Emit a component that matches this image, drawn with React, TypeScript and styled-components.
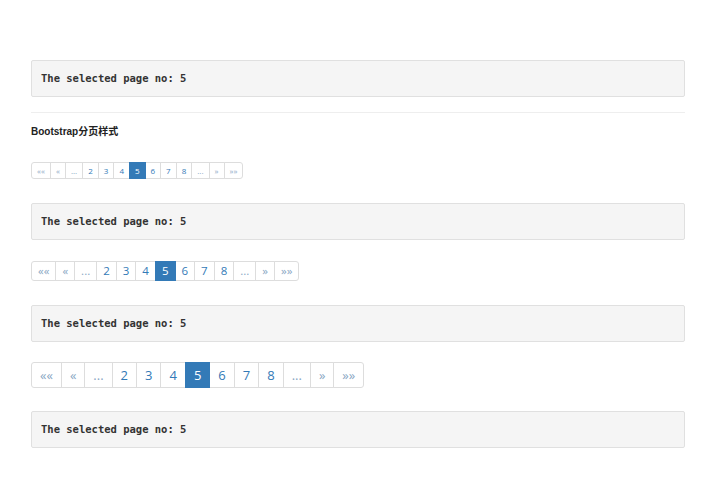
import React from "react";
import styled, { createGlobalStyle, css } from "styled-components";

const GlobalStyle = createGlobalStyle`
  html, body { margin: 0; padding: 0; background: #fff; }
  body { font-family: "Open Sans", "Noto Sans", sans-serif; color: #333; }
`;

const Page = styled.div`
  display: flex;
  flex-direction: column;
  align-items: flex-start;
  width: 654px;
  padding: 60px 0 0 31px;
`;

const Pre = styled.pre<{ $mb: number }>`
  box-sizing: border-box;
  width: 100%;
  margin: 0 0 ${(p) => p.$mb}px;
  padding: 11px 9px;
  height: 37px;
  line-height: 13px;
  font-family: "DejaVu Sans Mono", "Liberation Mono", monospace;
  font-weight: bold;
  font-size: 10.5px;
  color: #333;
  background: #f5f5f5;
  border: 1px solid #e0e0e0;
  border-radius: 2px;
`;

const Rule = styled.hr`
  width: 100%;
  margin: 15px 0 0;
  border: 0;
  border-top: 1px solid #eee;
`;

const Heading = styled.h4`
  margin: 12px 0 23px;
  font-family: "Liberation Sans", "Noto Sans CJK SC", sans-serif;
  font-weight: bold;
  font-size: 10px;
  line-height: 14px;
  color: #222;
`;

type Size = "sm" | "md" | "lg";

const sizes = {
  sm: css`font-size: 8px; line-height: 15px; padding: 0 5px;`,
  md: css`font-size: 11.5px; line-height: 18px; padding: 0 6px;`,
  lg: css`font-size: 13px; line-height: 24px; padding: 0 8px;`,
};

const Pagination = styled.ul<{ $mb: number }>`
  display: inline-flex;
  list-style: none;
  margin: 0 0 ${(p) => p.$mb}px;
  padding: 0;
  border-radius: 3px;
`;

const Item = styled.li<{ $size: Size; $active?: boolean; $muted?: boolean }>`
  ${(p) => sizes[p.$size]}
  margin-left: -1px;
  border: 1px solid #ddd;
  background: #fff;
  color: ${(p) => (p.$muted ? "#8aa7c4" : "#337ab7")};
  font-family: "Open Sans", sans-serif;
  text-align: center;
  &:first-child {
    margin-left: 0;
    border-radius: 3px 0 0 3px;
  }
  &:last-child {
    border-radius: 0 3px 3px 0;
  }
  ${(p) =>
    p.$active &&
    css`
      background: #337ab7;
      border-color: #337ab7;
      color: #fff;
      position: relative;
      z-index: 1;
    `}
`;

const items: { label: string; muted?: boolean; active?: boolean }[] = [
  { label: "««", muted: true },
  { label: "«", muted: true },
  { label: "...", muted: true },
  { label: "2" },
  { label: "3" },
  { label: "4" },
  { label: "5", active: true },
  { label: "6" },
  { label: "7" },
  { label: "8" },
  { label: "...", muted: true },
  { label: "»", muted: true },
  { label: "»»", muted: true },
];

const Pager: React.FC<{ size: Size; mb: number }> = ({ size, mb }) => (
  <Pagination $mb={mb}>
    {items.map((it, i) => (
      <Item key={i} $size={size} $active={it.active} $muted={it.muted}>
        {it.label}
      </Item>
    ))}
  </Pagination>
);

const TEXT = "The selected page no: 5";

export default function App() {
  return (
    <>
      <GlobalStyle />
      <Page>
        <Pre $mb={0}>{TEXT}</Pre>
        <Rule />
        <Heading>Bootstrap分页样式</Heading>
        <Pager size="sm" mb={24} />
        <Pre $mb={21}>{TEXT}</Pre>
        <Pager size="md" mb={24} />
        <Pre $mb={20}>{TEXT}</Pre>
        <Pager size="lg" mb={23} />
        <Pre $mb={0}>{TEXT}</Pre>
      </Page>
    </>
  );
}
